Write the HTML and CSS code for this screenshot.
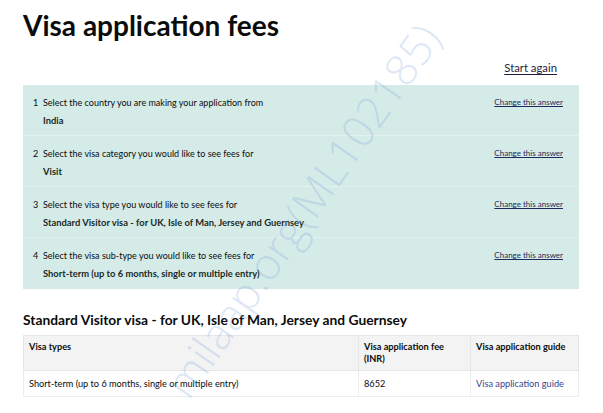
FILE: index.html
```html
<!DOCTYPE html>
<html lang="en">
<head>
<meta charset="utf-8">
<title>Visa application fees</title>
<link rel="stylesheet" href="styles.css">
</head>
<body>
<main class="page">
  <h1 class="title">Visa application fees</h1>
  <div class="restart"><a href="#" class="restart-link">Start again</a></div>
  <div class="answers">
    <div class="answer-row">
      <div class="answer-body">
        <div class="question"><span class="num">1</span>Select the country you are making your application from</div>
        <div class="value">India</div>
      </div>
      <a href="#" class="change">Change this answer</a>
    </div>
    <div class="answer-row">
      <div class="answer-body">
        <div class="question"><span class="num">2</span>Select the visa category you would like to see fees for</div>
        <div class="value">Visit</div>
      </div>
      <a href="#" class="change">Change this answer</a>
    </div>
    <div class="answer-row">
      <div class="answer-body">
        <div class="question"><span class="num">3</span>Select the visa type you would like to see fees for</div>
        <div class="value">Standard Visitor visa - for UK, Isle of Man, Jersey and Guernsey</div>
      </div>
      <a href="#" class="change">Change this answer</a>
    </div>
    <div class="answer-row">
      <div class="answer-body">
        <div class="question"><span class="num">4</span>Select the visa sub-type you would like to see fees for</div>
        <div class="value">Short-term (up to 6 months, single or multiple entry)</div>
      </div>
      <a href="#" class="change">Change this answer</a>
    </div>
  </div>
  <h2 class="subtitle">Standard Visitor visa - for UK, Isle of Man, Jersey and Guernsey</h2>
  <table class="fees">
    <thead>
      <tr>
        <th class="c1">Visa types</th>
        <th class="c2">Visa application fee (INR)</th>
        <th class="c3">Visa application guide</th>
      </tr>
    </thead>
    <tbody>
      <tr>
        <td>Short-term (up to 6 months, single or multiple entry)</td>
        <td>8652</td>
        <td><a href="#" class="guide">Visa application guide</a></td>
      </tr>
    </tbody>
  </table>
</main>
<div class="watermark">milaap.org(ML102185)</div>
</body>
</html>
```
FILE: styles.css
```css
html, body {
  margin: 0;
  padding: 0;
  background: #ffffff;
}
body {
  font-family: "Lato", "Liberation Sans", sans-serif;
  color: #0b0c0c;
  position: relative;
  overflow: hidden;
  height: 413px;
}
.page {
  padding: 0 24px 0 23px;
}
.title {
  font-size: 28px;
  font-weight: 700;
  line-height: 32px;
  margin: 9px 0 0 0;
}
.restart {
  display: flex;
  justify-content: flex-end;
  padding-right: 22px;
  margin-top: 19px;
  height: 25px;
}
.restart-link {
  font-size: 11.3px;
  color: #1d1d3b;
  line-height: 16px;
  text-decoration: underline;
  text-underline-offset: 2px;
}
.answers {
  background: #d5ebe8;
}
.answer-row {
  display: flex;
  justify-content: space-between;
  align-items: flex-start;
  height: 51px;
  padding: 11px 16px 0 10px;
  box-sizing: border-box;
  border-bottom: 1px solid #e3f1ef;
}
.answer-row:last-child {
  border-bottom: none;
}
.question {
  font-size: 9px;
  line-height: 13px;
}
.num {
  display: inline-block;
  width: 10px;
}
.value {
  font-size: 9.4px;
  font-weight: 700;
  line-height: 13px;
  margin-top: 5px;
  padding-left: 10px;
  color: #1b2a1f;
}
.change {
  font-size: 8px;
  line-height: 13px;
  color: #1d2a5c;
  text-decoration: underline;
}
.subtitle {
  font-size: 13.8px;
  font-weight: 700;
  line-height: 20px;
  margin: 21px 0 5px 0;
}
.fees {
  width: 100%;
  border-collapse: collapse;
  font-size: 9.2px;
  border: 1px solid #ececec;
}
.fees th {
  background: #f3f3f3;
  text-align: left;
  font-weight: 700;
  vertical-align: top;
  padding: 5px 5px 5px 5px;
  height: 24px;
  line-height: 12px;
  border: 1px solid #e6e6e6;
}
.fees td {
  padding: 6px 5px 6px 5px;
  line-height: 13px;
  border: 1px solid #ececec;
}
.c1 { width: 324px; }
.c2 { width: 101px; }
.guide {
  color: #3a3f8c;
  text-decoration: none;
}
.watermark {
  position: absolute;
  left: 302px;
  top: 210px;
  font-size: 44px;
  font-weight: 300;
  color: rgba(120, 160, 220, 0.26);
  transform: translate(-50%, -50%) rotate(-55deg);
  white-space: nowrap;
  pointer-events: none;
  font-family: "Open Sans", "Noto Sans", sans-serif;
}
```
